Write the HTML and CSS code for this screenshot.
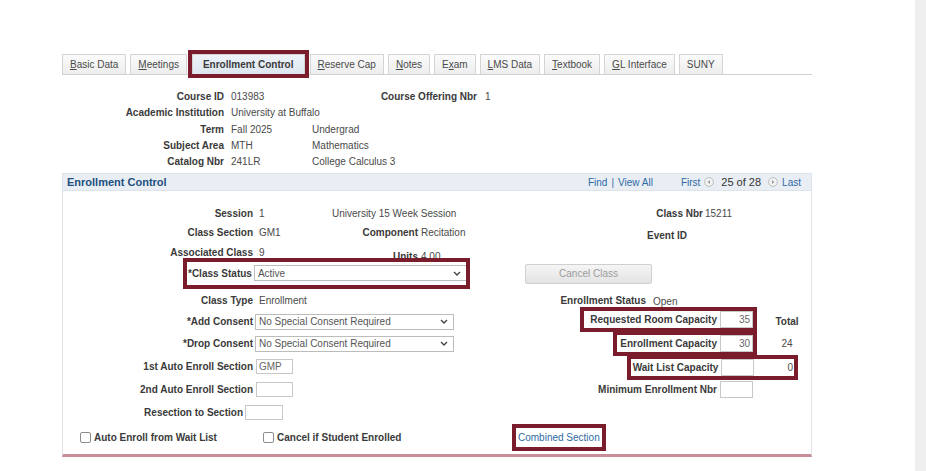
FILE: index.html
```html
<!DOCTYPE html>
<html lang="en">
  <head>
    <meta charset="UTF-8" />
    <title>Enrollment Control</title>
    <link rel="stylesheet" href="styles.css">
  </head>
  <body>
    <div class="page">
      <div class="main">
        <ul class="tabs">
          <li class="tab"><u>B</u>asic Data</li>
          <li class="tab"><u>M</u>eetings</li>
          <li class="tab active">Enrollment Control</li>
          <li class="tab"><u>R</u>eserve Cap</li>
          <li class="tab"><u>N</u>otes</li>
          <li class="tab">E<u>x</u>am</li>
          <li class="tab"><u>L</u>MS Data</li>
          <li class="tab"><u>T</u>extbook</li>
          <li class="tab"><u>G</u>L Interface</li>
          <li class="tab">SUNY</li>
        </ul>

        <!-- course key fields -->
        <div class="course">
          <span class="c-lbl">Course ID</span>
          <span class="c-val">013983</span>
          <span class="c-lbl">Course Offering Nbr</span>
          <span class="c-val2">1</span>

          <span class="c-lbl">Academic Institution</span>
          <span class="c-val wide">University at Buffalo</span>

          <span class="c-lbl">Term</span>
          <span class="c-val">Fall 2025</span>
          <span class="c-desc">Undergrad</span>

          <span class="c-lbl">Subject Area</span>
          <span class="c-val">MTH</span>
          <span class="c-desc">Mathematics</span>

          <span class="c-lbl">Catalog Nbr</span>
          <span class="c-val">241LR</span>
          <span class="c-desc">College Calculus 3</span>
        </div>

        <div class="panel">
          <div class="panel-head">
            <span class="panel-title">Enrollment Control</span>
            <span class="nav">
              <a class="link">Find</a> | <a class="link">View All</a>
              <a class="link first">First</a>
              <svg class="arrow" width="10" height="10" viewBox="0 0 10 10"><circle cx="5" cy="5" r="4.4" fill="#f3f3f3" stroke="#bdbdbd"/><path d="M6 2.9 L3.6 5 L6 7.1 Z" fill="#9a9a9a"/></svg>
              <span class="count">25 of 28</span>
              <svg class="arrow" width="10" height="10" viewBox="0 0 10 10"><circle cx="5" cy="5" r="4.4" fill="#f3f3f3" stroke="#bdbdbd"/><path d="M4 2.9 L6.4 5 L4 7.1 Z" fill="#9a9a9a"/></svg>
              <a class="link">Last</a>
            </span>
          </div>

          <div class="panel-body">
            <!-- row 1 -->
            <div class="cell">
              <span class="lb">Session</span>
              <span class="tx fix">1</span>
              <span class="tx-plain">University 15 Week Session</span>
            </div>
            <div class="cell">
              <span class="lb w-nbr">Class Nbr</span>
              <span class="tx-r">15211</span>
            </div>

            <!-- row 2 -->
            <div class="cell">
              <span class="lb">Class Section</span>
              <span class="tx fix">GM1</span>
              <span class="lb2">Component</span>
              <span class="tx2">Recitation</span>
            </div>
            <div class="cell event">
              <span class="lb w-event">Event ID</span>
            </div>

            <!-- row 3 -->
            <div class="cell">
              <span class="lb">Associated Class</span>
              <span class="tx fix">9</span>
              <span class="units"><span class="lb2">Units</span><span class="tx2">4.00</span></span>
            </div>
            <div class="cell"></div>

            <!-- row 4 -->
            <div class="cell status">
              <span class="hl">
                <span class="lb-auto">*Class Status</span>
                <span class="sel">
                  <select class="w-status"><option>Active</option></select>
                  <svg class="chev" width="8" height="5" viewBox="0 0 8 5"><path d="M1 1 L4 4 L7 1" fill="none" stroke="#444" stroke-width="1.4"/></svg>
                </span>
              </span>
            </div>
            <div class="cell">
              <button class="btn" disabled>Cancel Class</button>
            </div>

            <!-- row 5 -->
            <div class="cell low">
              <span class="lb">Class Type</span>
              <span class="tx">Enrollment</span>
            </div>
            <div class="cell low">
              <span class="lb w-status">Enrollment Status</span>
              <span class="tx-open">Open</span>
            </div>

            <!-- row 6 -->
            <div class="cell">
              <span class="lb">*Add Consent</span>
              <span class="sel">
                <select class="w-consent"><option>No Special Consent Required</option></select>
                <svg class="chev" width="8" height="5" viewBox="0 0 8 5"><path d="M1 1 L4 4 L7 1" fill="none" stroke="#444" stroke-width="1.4"/></svg>
              </span>
            </div>
            <div class="cell cap cap-req">
              <span class="hl">
                <span class="lb-auto">Requested Room Capacity</span>
                <input class="num" type="text" value="35">
              </span>
              <span class="tot bold">Total</span>
            </div>

            <!-- row 7 -->
            <div class="cell">
              <span class="lb">*Drop Consent</span>
              <span class="sel">
                <select class="w-consent"><option>No Special Consent Required</option></select>
                <svg class="chev" width="8" height="5" viewBox="0 0 8 5"><path d="M1 1 L4 4 L7 1" fill="none" stroke="#444" stroke-width="1.4"/></svg>
              </span>
            </div>
            <div class="cell cap cap-enr">
              <span class="hl">
                <span class="lb-auto">Enrollment Capacity</span>
                <input class="num" type="text" value="30">
              </span>
              <span class="tot">24</span>
            </div>

            <!-- row 8 -->
            <div class="cell">
              <span class="lb">1st Auto Enroll Section</span>
              <input class="txt" type="text" value="GMP">
            </div>
            <div class="cell cap cap-wait">
              <span class="hl">
                <span class="lb-auto">Wait List Capacity</span>
                <input class="num" type="text" value="">
                <span class="zero">0</span>
              </span>
            </div>

            <!-- row 9 -->
            <div class="cell">
              <span class="lb">2nd Auto Enroll Section</span>
              <input class="txt" type="text" value="">
            </div>
            <div class="cell cap">
              <span class="lb-auto">Minimum Enrollment Nbr</span>
              <input class="num" type="text" value="">
              <span class="tot"></span>
            </div>

            <!-- row 10 -->
            <div class="cell">
              <span class="lb w-resec">Resection to Section</span>
              <input class="txt" type="text" value="">
            </div>
            <div class="cell"></div>

            <!-- row 11 -->
            <div class="cell checks">
              <label class="chk"><input type="checkbox">Auto Enroll from Wait List</label>
              <label class="chk"><input type="checkbox">Cancel if Student Enrolled</label>
            </div>
            <div class="cell">
              <span class="hl combined"><a class="link">Combined Section</a></span>
            </div>
          </div>
        </div>
      </div>
      <div class="scrollbar"></div>
    </div>
  </body>
</html>
```

FILE: styles.css
```css
* {
  box-sizing: border-box;
}
body {
  margin: 0;
  font-family: "Liberation Sans", Arial, sans-serif;
  font-size: 10px;
  color: #3a3a3a;
  background: #fff;
}
.page {
  display: flex;
  min-height: 100vh;
}
.main {
  width: 812px;
  padding: 54px 0 0 62px;
}
.scrollbar {
  margin-left: auto;
  width: 11px;
  background: #efefef;
}

/* tabs */
.tabs {
  display: flex;
  gap: 4px;
  list-style: none;
  margin: 0;
  padding: 0;
  border-bottom: 1px solid #d2d2d2;
}
.tab {
  height: 20px;
  line-height: 19px;
  padding: 0 7px;
  border: 1px solid #d4d4d4;
  border-bottom: 0;
  background: linear-gradient(#fbfbfb, #ededed);
  color: #4a4a4a;
  white-space: nowrap;
}
.tab u {
  text-decoration-thickness: 1px;
}
.tab.active {
  margin: 0 1px;
  padding: 0 10px;
  font-weight: bold;
  color: #3a3a3a;
  background: linear-gradient(#eef3f9, #dde6f0);
  outline: 4px solid #7a1c2b;
}

/* course key */
.course {
  display: grid;
  grid-template-columns: 162px 88px 165px auto;
  grid-auto-rows: 16.25px;
  line-height: 16px;
  margin-top: 14px;
}
.c-lbl {
  font-weight: bold;
  text-align: right;
}
.c-val {
  padding-left: 7px;
  color: #4a4a4a;
}
.c-val.wide {
  grid-column: span 3;
}
.c-desc {
  grid-column: span 2;
  color: #4a4a4a;
}
.c-val2 {
  padding-left: 8px;
  color: #4a4a4a;
}

/* panel */
.panel {
  margin-top: 3px;
  width: 750px;
}
.panel-head {
  display: flex;
  justify-content: space-between;
  align-items: center;
  height: 18px;
  padding: 0 10px 0 4px;
  background: #e9eef4;
  border: 1px solid #dde3ea;
}
.panel-title {
  font-size: 11px;
  font-weight: bold;
  color: #22507f;
}
.nav {
  display: flex;
  align-items: center;
  gap: 4px;
  color: #3b6ea3;
}
.link {
  color: #2e6aa5;
  cursor: pointer;
}
.first {
  margin-left: 24px;
}
.count {
  margin: 0 3px;
  font-size: 11px;
  color: #333;
}
.arrow {
  display: block;
}

.panel-body {
  display: grid;
  grid-template-columns: 447px 1fr;
  grid-template-rows: 20px 19px 20px 23px 26px 21px 23px 22px 24px 23px 26px;
  padding: 12px 0 4px;
  border: 1px solid #e3e3e3;
  border-top: 0;
  border-bottom: 3px solid #c98f99;
}
.cell {
  display: flex;
  align-items: center;
  white-space: nowrap;
}
.cell.low {
  padding-top: 4px;
}
.lb {
  flex: none;
  width: 190px;
  text-align: right;
  font-weight: bold;
}
.lb-auto {
  font-weight: bold;
}
.lb2 {
  flex: none;
  width: 86px;
  text-align: right;
  font-weight: bold;
}
.tx {
  margin-left: 6px;
  color: #4a4a4a;
}
.tx.fix {
  width: 73px;
}
.tx2 {
  margin-left: 3px;
  color: #4a4a4a;
}
.tx-plain {
  color: #4a4a4a;
}
.units {
  display: flex;
  padding-top: 9px;
}
.w-nbr {
  width: 193px;
}
.tx-r {
  margin-left: 2px;
  color: #4a4a4a;
}
.event {
  padding-top: 5px;
}
.w-event {
  width: 177px;
}
.w-status {
  width: 136px;
}
.tx-open {
  margin-left: 7px;
  margin-top: 2px;
  color: #4a4a4a;
}
.w-resec {
  width: 180px;
}

/* highlight boxes */
.hl {
  display: inline-flex;
  align-items: center;
  outline: 4px solid #7a1c2b;
}
.status {
  padding-left: 124px;
}
.status .hl {
  padding: 3px 5px 4px 1px;
}
.combined {
  margin-left: 6px;
  padding: 4px 2px;
  line-height: 11px;
}

/* form controls */
.sel {
  display: inline-flex;
  align-items: center;
  margin-left: 2px;
}
select {
  appearance: none;
  height: 16px;
  padding: 0 0 0 3px;
  border: 1px solid #bcbcbc;
  border-radius: 0;
  background: #fff;
  font-family: inherit;
  font-size: 10px;
  color: #555;
}
select.w-status {
  width: 213px;
}
select.w-consent {
  width: 199px;
}
.chev {
  margin-left: -14px;
  pointer-events: none;
}
.txt {
  width: 37px;
  height: 15px;
  margin-left: 3px;
  padding: 0 2px;
  border: 1px solid #c8c8c8;
  font-family: inherit;
  font-size: 10px;
  color: #666;
}
.w-resec + .txt {
  margin-left: 2px;
  width: 38px;
}
.num {
  width: 33px;
  height: 17px;
  margin-left: 3px;
  padding: 0 2px;
  border: 1px solid #c8c8c8;
  text-align: right;
  font-family: inherit;
  font-size: 10px;
  color: #666;
}
.btn {
  width: 127px;
  height: 20px;
  margin-left: 15px;
  border: 1px solid #cfcfcf;
  border-radius: 2px;
  background: linear-gradient(#f5f5f5, #e3e3e3);
  font-family: inherit;
  font-size: 10px;
  color: #9c9c9c;
}

/* capacity rows */
.cap {
  justify-content: flex-end;
  padding-right: 7px;
}
.tot {
  width: 34px;
  margin-left: 17px;
  text-align: center;
  color: #4a4a4a;
}
.tot.bold {
  font-weight: bold;
  color: #3a3a3a;
}
.cap-req .hl {
  padding-left: 6px;
  margin-bottom: 4px;
}
.cap-enr .hl {
  padding-left: 3px;
}
.cap-wait {
  padding-right: 17px;
}
.cap-wait .hl {
  padding: 0 1px 0 2px;
  margin-top: 3px;
}
.zero {
  margin-left: 33px;
  color: #4a4a4a;
}

/* checkboxes */
.checks {
  padding-left: 17px;
}
.chk {
  display: flex;
  align-items: center;
  width: 183px;
  font-weight: bold;
}
.chk input {
  appearance: none;
  width: 11px;
  height: 11px;
  margin: 0 3px 0 0;
  border: 1px solid #8c8c8c;
  border-radius: 2px;
  background: #fff;
}
```
